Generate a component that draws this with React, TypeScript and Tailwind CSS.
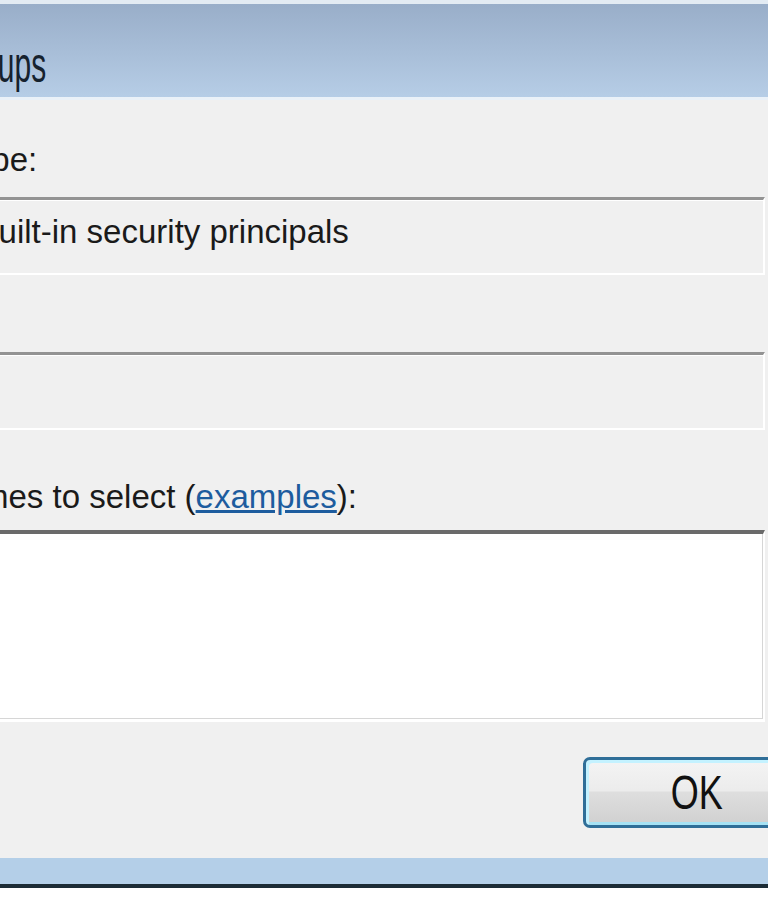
import React from 'react'

const font = "font-['Liberation_Sans',Arial,sans-serif]"

const ReadOnlyBox: React.FC<{ text?: string }> = ({ text }) => {
  return (
    <div className="w-[1058px] h-[78px] border-t-[3px] border-l-[3px] border-t-[#939393] border-l-[#939393] border-r-2 border-b-2 border-r-white border-b-white">
      <div className="h-full border-t border-l border-white -ml-[4px] pt-[14px] text-[33px] leading-none text-[#1a1a1a] whitespace-nowrap">
        {text ?? '\u00a0'}
      </div>
    </div>
  )
}

const App: React.FC = () => {
  return (
    <div className={`w-[768px] h-[913px] overflow-hidden bg-[#f0f0f0] flex flex-col ${font}`}>
      <div className="h-[4px] bg-[#e3ebf3]" />
      <div className="h-[93px] bg-gradient-to-b from-[#99aec9] to-[#b6cde6]">
        <div className="w-[46px] flex justify-end pt-[36px]">
          <span className="inline-block whitespace-nowrap text-[50px] leading-none text-[#16222e] scale-x-[0.6] origin-right">
            Select Users, Computers, Service Accounts, or Groups
          </span>
        </div>
      </div>
      <div className="h-[3px] bg-[#eaf1f8]" />

      <div className="h-[758px] -ml-[293px] w-[1500px] flex flex-col text-[#1a1a1a]">
        <div className="mt-[43px] text-[33px] leading-none whitespace-nowrap">Select this object type:</div>
        <div className="mt-[21px]">
          <ReadOnlyBox text="Users, Groups, or Built-in security principals" />
        </div>

        <div className="mt-[22px] mb-[22px] text-[33px] leading-none whitespace-nowrap">From this location:</div>
        <ReadOnlyBox />

        <div className="mt-[50px] -ml-[3px] text-[33px] leading-none whitespace-nowrap">
          Enter the object names to select (
          <span className="text-[#1d5c9e] underline underline-offset-2">examples</span>
          ):
        </div>

        <div className="mt-[17px] w-[1058px] h-[192px] border-t-4 border-l-4 border-t-[#6a6a6a] border-l-[#6a6a6a] border-r-2 border-b-[3px] border-r-white border-b-white">
          <div className="h-full bg-white border-r border-b border-[#d6d6d6]" />
        </div>

        <div className="mt-[35px] ml-[876px] w-[228px] h-[71px] rounded-[7px] border-[3px] border-[#2f6e98] bg-[linear-gradient(to_bottom,#f4f4f4_0%,#ececec_47%,#dedede_50%,#d0d0d0_100%)] shadow-[inset_3px_3px_0_#c4f2ff,inset_-1px_-3px_0_#a6e2f4] flex items-center justify-center">
          <span className="inline-block text-[48px] leading-none text-[#111] scale-x-75">OK</span>
        </div>
      </div>

      <div className="h-[26px] bg-[#b4cfe8]" />
      <div className="h-[4px] bg-[#1c2c36]" />
      <div className="h-[25px] bg-white" />
    </div>
  )
}

export default App
